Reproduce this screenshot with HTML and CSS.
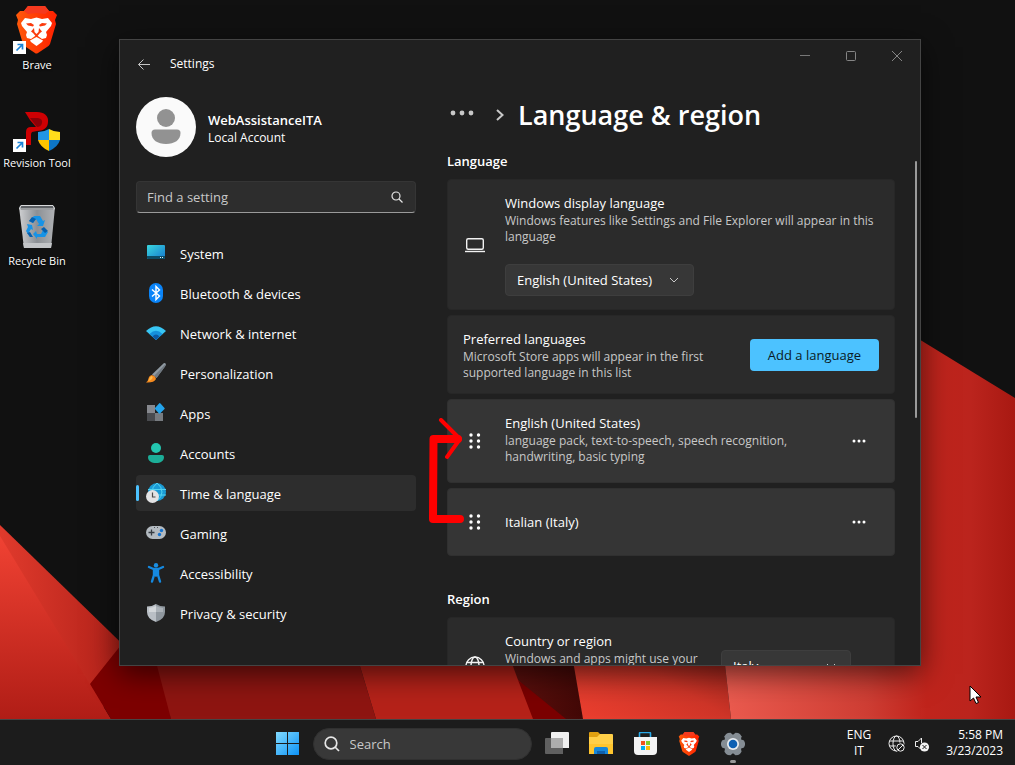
FILE: index.html
```html
<!doctype html>
<html lang="en">
<head>
  <meta charset="utf-8">
  <meta name="viewport" content="width=device-width, initial-scale=1">
  <title>Settings</title>
  <link rel="stylesheet" href="styles.css">
</head>
<body>
  <svg class="defs" width="0" height="0" aria-hidden="true">
    <defs>
      <linearGradient id="brave" x1="0" x2="1"><stop offset="0" stop-color="#ff5a0a"/><stop offset="1" stop-color="#ff2000"/></linearGradient>
      <symbol id="lion" viewBox="0 0 41 48">
        <path fill="url(#brave)" d="M12 0H29L33 5L37 5L41 9L39 14L40 18L34 38Q33 40 31 41L22 47Q20 48 19 47L10 41Q8 40 7 38L1 18L2 14L0 9L4 5L8 5Z"/>
        <path fill="#f5391e" d="M12 0H29L33 5L29 8L20 7L12 8L8 5Z"/>
        <path fill="#fff" d="M5 17L9 12L15 13L20.500 11.500L26 13L32 12L36 17L35 20L30 26L31 29L30 32L26 33L20.500 29L15 33L11 32L10 29L11 26L6 20Z"/>
        <path fill="#fff" d="M14 34.500L20.500 31L27 34.500L26 36L20.500 40L15 36Z"/>
        <path fill="#fb3a0c" d="M10 17.500L15 17L18 19L17 20.500L12 19.500ZM31 17.500L26 17L23 19L24 20.500L29 19.500ZM15 25.500L18 22L18.500 26L20.500 28L22.500 26L23 22L26 25.500L24 27L21.500 30H19.500L17 27Z"/>
      </symbol>
      <symbol id="shortcut" viewBox="0 0 13 13">
        <path fill="#fff" d="M0 0h13v13H0z"/>
        <path fill="none" stroke="#1a83d8" stroke-width="1.700" d="M3.500 9.500L9 4M4.500 3.500h5v5"/>
      </symbol>
      <symbol id="chevron" viewBox="0 0 10 6">
        <path fill="none" stroke="#c8c8c8" d="M1 1l4 4 4-4"/>
      </symbol>
      <symbol id="grip" viewBox="0 0 12 16">
        <g fill="#fff"><circle cx="2" cy="2" r="1.700"/><circle cx="9.500" cy="2" r="1.700"/><circle cx="2" cy="8" r="1.700"/><circle cx="9.500" cy="8" r="1.700"/><circle cx="2" cy="14" r="1.700"/><circle cx="9.500" cy="14" r="1.700"/></g>
      </symbol>
      <symbol id="dots" viewBox="0 0 14 4">
        <g fill="#fff"><circle cx="2" cy="2" r="1.500"/><circle cx="7" cy="2" r="1.500"/><circle cx="12" cy="2" r="1.500"/></g>
      </symbol>
    </defs>
  </svg>

  <main class="desktop">
    <svg class="wallpaper" viewBox="0 0 1015 719" preserveAspectRatio="none" aria-hidden="true">
      <defs>
        <linearGradient id="w1" x2="0" y2="1"><stop offset="0" stop-color="#f04233"/><stop offset="1" stop-color="#b01d16"/></linearGradient>
        <linearGradient id="w2" x2="1" y2="0"><stop offset="0" stop-color="#e03a2c"/><stop offset="1" stop-color="#a91d16"/></linearGradient>
        <linearGradient id="w3" x1="0" y1="1" x2="1" y2="0"><stop offset="0" stop-color="#ee4030"/><stop offset=".5" stop-color="#cf3528"/><stop offset="1" stop-color="#7d1a14"/></linearGradient>
        <linearGradient id="w4"><stop offset="0" stop-color="#ec5c50"/><stop offset=".5" stop-color="#cf3e34"/><stop offset=".7" stop-color="#c0241c"/><stop offset=".85" stop-color="#bb241d"/><stop offset="1" stop-color="#a81912"/></linearGradient>
        <linearGradient id="w5"><stop offset="0" stop-color="#63120f"/><stop offset="1" stop-color="#420806"/></linearGradient>
      </defs>
      <path fill="url(#w2)" d="M0 525L145 666 91 719H0z"/>
      <path fill="url(#w1)" d="M0 536L111 719H0z"/>
      <path fill="#7d0000" d="M90 684L125 640H160L171 719H111z"/>
      <path fill="#8e1511" d="M145 620H346L376 719H171z"/>
      <path fill="#b52219" d="M346 620H500L534 719H376z"/>
      <path fill="url(#w5)" d="M496 620H566L583 719H560L518 680z"/>
      <path fill="#7b0000" d="M518 680L566 719H533z"/>
      <path fill="url(#w3)" d="M566 620H720L731 719H583z"/>
      <path fill="url(#w4)" d="M720 620L860 303 1015 398V719H731z"/>
    </svg>

    <nav class="shortcuts" aria-label="Desktop">
      <a class="shortcut" href="#brave">
        <svg width="50" height="48" viewBox="0 0 50 48"><use href="#lion" x="4" width="41" height="48"/><use href="#shortcut" x="1" y="35" width="13" height="13"/></svg>
        <span>Brave</span>
      </a>
      <a class="shortcut" href="#revision">
        <svg width="50" height="48" viewBox="0 0 50 48">
          <path fill="#cf0003" d="M13 8H25C32 8 37 12 36 18C36 24 31 27 25 27L20 28Q19 29 19 31V41H14V28Q14 23 19 23H24L18 16Z"/>
          <path fill="#8c0007" d="M18 14H26Q31 15 30 19Q29 23 25 23Z"/>
          <path fill="#2196e3" d="M26 28Q32 28 37 25V36H26z"/><path fill="#ffdd1b" d="M37 25Q42 28 48 28V36H37z"/>
          <path fill="#ffc400" d="M26 36H37V47Q28 43 26 36"/><path fill="#0d76c6" d="M37 36H48Q46 43 37 47z"/>
          <use href="#shortcut" x="1" y="35" width="13" height="13"/>
        </svg>
        <span>Revision Tool</span>
      </a>
      <a class="shortcut" href="#bin">
        <svg width="50" height="48" viewBox="0 0 50 48">
          <defs><linearGradient id="bin"><stop offset="0" stop-color="#cfd0d2"/><stop offset=".5" stop-color="#8c9095"/><stop offset="1" stop-color="#b0b2b5"/></linearGradient></defs>
          <path fill="url(#bin)" d="M7 5H43L39 46H12z"/>
          <path fill="#5d6064" d="M9 3H40L43 5 41 8H9L7 5z"/>
          <path fill="none" stroke="#d9dadb" d="M9 3.500H41L42.500 7H7.500z"/>
          <path fill="#c3c5c8" d="M11 41H40L39 46H12z"/>
          <path fill="#1793e6" d="M22 14h6l3 5 2-1-2 6h-6l2-2-3-5-3 4-4-2zM15 22l5 1 1 5-2-1-3 5 3 3-1 0-4-6 2-4zM24 29l1 3h4l2-4 5 2-3 5h-8v2l-4-5z"/>
          <path fill="#0760ae" d="M20 15l4 2-3 4-4-2zM29 27l3-2 4 4-3 2zM18 30l3 5h-3l-3-4z"/>
        </svg>
        <span>Recycle Bin</span>
      </a>
    </nav>

    <section class="window">
      <header class="titlebar">
        <button class="back" aria-label="Back"><svg width="14" height="14" viewBox="0 0 14 14"><path fill="none" stroke="#c4c4c4" d="M13 7.500H1.500M6.500 2.500l-5 5 5 5"/></svg></button>
        <span class="app-name">Settings</span>
        <div class="caption">
          <button aria-label="Minimize"><svg width="12" height="12" viewBox="0 0 12 12"><path stroke="#777" d="M1 5.500h10"/></svg></button>
          <button aria-label="Maximize"><svg width="12" height="12" viewBox="0 0 12 12"><rect x="1.500" y="1.500" width="9" height="9" rx="1" fill="none" stroke="#858585"/></svg></button>
          <button aria-label="Close"><svg width="12" height="12" viewBox="0 0 12 12"><path stroke="#858585" d="M1 1l10 10M11 1L1 11"/></svg></button>
        </div>
      </header>

      <div class="content">
        <aside class="sidebar">
          <div class="account">
            <svg width="60" height="60" viewBox="0 0 60 60"><circle cx="30" cy="30" r="30" fill="#fafafa"/><circle cx="30" cy="21" r="9" fill="#929292"/><path fill="#929292" d="M19 32.500h22q3.500 0 3.500 3.500c0 7-6 11-14.500 11s-14.500-4-14.500-11q0-3.500 3.500-3.500z"/></svg>
            <div>
              <div class="user">WebAssistanceITA</div>
              <div class="kind">Local Account</div>
            </div>
          </div>

          <label class="find">
            <input type="search" placeholder="Find a setting" aria-label="Find a setting">
            <svg width="12" height="12" viewBox="0 0 12 12"><g fill="none" stroke="#e4e4e4" stroke-width="1.200"><circle cx="5" cy="5" r="4"/><path d="M8 8l3.500 3.500"/></g></svg>
          </label>

          <nav class="menu" aria-label="Settings">
            <a href="#system">
              <svg width="20" height="20" viewBox="0 0 20 20"><defs><linearGradient id="sys" x2="1" y2="1"><stop offset="0" stop-color="#3ad8df"/><stop offset="1" stop-color="#1577cd"/></linearGradient></defs><rect x="1" y="2" width="18" height="14" rx="1" fill="url(#sys)"/><path fill="#0c4c66" d="M1 13h18v2q0 1-1 1H2q-1 0-1-1z"/><path fill="#e0f4ff" d="M14 14h1v1h-1zM16 14h1v1h-1z"/></svg>
              <span>System</span></a>
            <a href="#bluetooth">
              <svg width="20" height="20" viewBox="0 0 20 20"><rect x="3" width="14" height="20" rx="7" fill="#0a84f8"/><path fill="none" stroke="#fff" stroke-width="1.400" d="M6 6.500l7.500 6.500-3.500 3.500V3.500L13.500 7 6 13.500"/></svg>
              <span>Bluetooth &amp; devices</span></a>
            <a href="#network">
              <svg width="20" height="20" viewBox="0 0 20 20"><path fill="#38c6f4" d="M0 8Q10-1.500 20 8L10 17z"/><path fill="#1590dc" d="M3.500 11Q10 4.500 16.500 11L10 17z"/><path fill="#0c59a4" d="M6.500 13.500Q10 9.500 13.500 13.500L10 17z"/></svg>
              <span>Network &amp; internet</span></a>
            <a href="#personalization">
              <svg width="20" height="20" viewBox="0 0 20 20"><path fill="#909aa2" d="M18 0q3 0 1 3.500L10.500 15 6 11.500z"/><path fill="#6f7880" d="M19.500 1q.5 1-.5 2.500L10.500 15 8 13z"/><path fill="#f58a1f" d="M6 12q3.500 1 4 4-2 4-10 3.500 2-1 2.500-4Q3 12.500 6 12z"/><path fill="#ffbb4a" d="M5.500 13q2 1 .5 3-2 2-4 2 1.500-1 1.500-3z"/></svg>
              <span>Personalization</span></a>
            <a href="#apps">
              <svg width="20" height="20" viewBox="0 0 20 20"><path fill="#87898f" d="M1 2h8v8H1z"/><path fill="#494b4f" d="M1 10h8v8H1z"/><path fill="#777b80" d="M9 10h8v8H9z"/><path fill="#23a4ec" d="M13.500 0q.5 0 1 .5L18.500 5q.5.5 0 1L14 10.500q-.5.5-1 0L9 6q-.5-.5 0-1z"/></svg>
              <span>Apps</span></a>
            <a href="#accounts">
              <svg width="20" height="20" viewBox="0 0 20 20"><circle cx="10" cy="5" r="5" fill="#23c6b0"/><path fill="#1cae98" d="M4 12h12q2 0 2 2c0 4-3.500 6-8 6s-8-2-8-6q0-2 2-2z"/></svg>
              <span>Accounts</span></a>
            <a class="active" href="#time" aria-current="page">
              <svg width="20" height="20" viewBox="0 0 20 20"><circle cx="11" cy="9" r="9" fill="#1a9bd5"/><path fill="none" stroke="#53d3f0" d="M2 6.500h18M3 12h17M11 0q-5 4-5 9t5 9q5-4 5-9t-5-9z"/><circle cx="6.500" cy="13.500" r="6.500" fill="#e3e3e4"/><path fill="none" stroke="#4a4a4a" stroke-width="1.200" d="M6.500 9.500V14h3"/></svg>
              <span>Time &amp; language</span></a>
            <a href="#gaming">
              <svg width="20" height="20" viewBox="0 0 20 20"><rect y="3" width="20" height="13" rx="6.500" fill="#b3bac0"/><path stroke="#343b42" stroke-width="1.300" d="M2.500 9.500h6M5.500 6.500v6"/><circle cx="15.500" cy="7.500" r="1.700" fill="#1573cf"/><circle cx="13.500" cy="11.500" r="1.700" fill="#1573cf"/><path fill="#4c5156" d="M8 4h1v1H8zM11 4h1v1h-1z"/></svg>
              <span>Gaming</span></a>
            <a href="#accessibility">
              <svg width="20" height="20" viewBox="0 0 20 20"><circle cx="10" cy="2.200" r="2.200" fill="#1b8fe2"/><path fill="none" stroke="#1589e0" stroke-width="2.400" stroke-linecap="round" stroke-linejoin="round" d="M3 4l4.500 2h5L17 4M8 7v5L6 18.500M12 7v5L14 18.500"/><path fill="#1589e0" d="M7 6h6v7l-1.500 0L10 14l-1.500-1H7z"/></svg>
              <span>Accessibility</span></a>
            <a href="#privacy">
              <svg width="20" height="20" viewBox="0 0 20 20"><path fill="#b9bfc5" d="M10 1Q6 3.500 1 3.500V9q0 7 9 10z"/><path fill="#8f979e" d="M10 1q4 2.500 9 2.500V9q0 7-9 10z"/><path fill="#d3d7da" d="M10 3Q7 4.500 3 5v4h7z"/><path fill="#abb2b8" d="M10 3q3 1.500 7 2v4h-7z"/></svg>
              <span>Privacy &amp; security</span></a>
          </nav>
        </aside>

        <section class="page">
          <div class="breadcrumb">
            <button aria-label="More"><svg width="24" height="6" viewBox="0 0 24 6"><g fill="#c8c8c8"><circle cx="3" cy="3" r="2.400"/><circle cx="12" cy="3" r="2.400"/><circle cx="21" cy="3" r="2.400"/></g></svg></button>
            <svg width="8" height="12" viewBox="0 0 8 12"><path fill="none" stroke="#c8c8c8" stroke-width="2" d="M1 1l5.500 5L1 11"/></svg>
            <h1>Language &amp; region</h1>
          </div>

          <h2>Language</h2>
          <div class="cards">
            <div class="card">
              <svg class="icon" width="20" height="16" viewBox="0 0 20 16"><rect x="1.700" y="1.700" width="16.600" height="10.600" rx="1.500" fill="none" stroke="#f2f2f2" stroke-width="1.400"/><path stroke="#f2f2f2" stroke-width="1.400" d="M0 14.500h20"/></svg>
              <div class="text">
                <label class="name" for="display">Windows display language</label>
                <p>Windows features like Settings and File Explorer will appear in this language</p>
                <div class="select">
                  <select id="display"><option>English (United States)</option></select>
                  <svg width="10" height="6"><use href="#chevron"/></svg>
                </div>
              </div>
            </div>

            <div class="card plain">
              <div class="text narrow">
                <div class="name">Preferred languages</div>
                <p>Microsoft Store apps will appear in the first supported language in this list</p>
              </div>
              <button class="primary">Add a language</button>
            </div>

            <div class="card language">
              <svg class="icon" width="12" height="16"><use href="#grip"/></svg>
              <div class="text">
                <div class="name">English (United States)</div>
                <p>language pack, text-to-speech, speech recognition, handwriting, basic typing</p>
              </div>
              <button class="more" aria-label="English options"><svg width="14" height="4"><use href="#dots"/></svg></button>
            </div>

            <div class="card language">
              <svg class="icon" width="12" height="16"><use href="#grip"/></svg>
              <div class="text">
                <div class="name">Italian (Italy)</div>
              </div>
              <button class="more" aria-label="Italian options"><svg width="14" height="4"><use href="#dots"/></svg></button>
            </div>
          </div>

          <h2 class="second">Region</h2>
          <div class="cards">
            <div class="card region">
              <svg class="icon" width="20" height="20" viewBox="0 0 20 20"><g fill="none" stroke="#f2f2f2" stroke-width="1.400"><circle cx="10" cy="10" r="9"/><ellipse cx="10" cy="10" rx="4" ry="9"/><path d="M2 6.500h16M2 13.500h16"/></g></svg>
              <div class="text">
                <label class="name" for="country">Country or region</label>
                <p>Windows and apps might use your</p>
              </div>
              <div class="select wide">
                <select id="country"><option>Italy</option></select>
                <svg width="10" height="6"><use href="#chevron"/></svg>
              </div>
            </div>
          </div>
        </section>
      </div>
      <div class="scrollbar"></div>

      <!-- move Italian above English -->
      <svg class="arrow" width="40" height="110" viewBox="0 0 40 110" aria-hidden="true">
        <g fill="none" stroke="#f00" stroke-linecap="round" stroke-linejoin="round">
          <path stroke-width="8" d="M30 21H5.500L5 101H32"/>
          <path stroke-width="4" d="M13 2L32 21 19 39"/>
        </g>
      </svg>
    </section>

    <svg class="cursor" width="13" height="20" viewBox="0 0 13 20" aria-hidden="true"><path fill="#fff" stroke="#000" d="M1 1v15l3.500-3 2.500 5.500 2.500-1L7 12h5z"/></svg>
  </main>

  <footer class="taskbar">
    <div class="pinned">
      <button aria-label="Start"><svg width="24" height="24" viewBox="0 0 24 24"><defs><linearGradient id="win" gradientUnits="userSpaceOnUse" x2="24" y2="24"><stop offset="0" stop-color="#84dcff"/><stop offset="1" stop-color="#0a90f5"/></linearGradient></defs><path fill="url(#win)" d="M1 0h11v11H1zM13 0h11v11H13zM1 12h11v11H1zM13 12h11v11H13z"/></svg></button>
      <label class="search">
        <svg width="16" height="16" viewBox="0 0 16 16"><g fill="none" stroke="#e6e6e6" stroke-width="1.700"><circle cx="7" cy="7" r="5.800"/><path d="M11 11l4 4"/></g></svg>
        <input type="search" placeholder="Search" aria-label="Search">
      </label>
      <button aria-label="Task view"><svg width="24" height="24" viewBox="0 0 24 24"><path fill="#f0f0f0" d="M7 0h16q1 0 1 1v15H6V1q0-1 1-1z"/><path fill="#606060" d="M1 6h17v16H1q-1 0-1-1V7q0-1 1-1z"/><path fill="#adadad" d="M6 6h12v10H6z"/></svg></button>
      <button aria-label="File Explorer"><svg width="24" height="24" viewBox="0 0 24 24"><path fill="#e0a010" d="M0 1q0-1 1-1h8l2 2v4H0z"/><path fill="#ffcf48" d="M0 5h8l3-3h12q1 0 1 1v19H0z"/><path fill="#ffc52e" d="M0 12h24v10H0z"/><path fill="#1687da" d="M5 17q0-2 2-2h10q2 0 2 2v5H5z"/><path fill="#0e60ad" d="M8 19h8v3H8z"/></svg></button>
      <button aria-label="Microsoft Store"><svg width="24" height="24" viewBox="0 0 24 24"><path fill="none" stroke="#29a9e8" stroke-width="1.600" d="M6.500 6V1.500q0-1 1-1h9q1 0 1 1V6"/><path fill="#f3f3f3" d="M1 5h23v14q0 4-4 4H5q-4 0-4-4z"/><path fill="#f1511b" d="M8 9h4v4H8z"/><path fill="#80cc28" d="M13 9h4v4h-4z"/><path fill="#00adef" d="M8 14h4v4H8z"/><path fill="#fbbc09" d="M13 14h4v4h-4z"/></svg></button>
      <button aria-label="Brave"><svg width="24" height="24"><use href="#lion"/></svg></button>
      <button class="running" aria-label="Settings"><svg width="24" height="24" viewBox="0 0 24 24"><g fill="#858d94"><circle cx="12" cy="12" r="9"/><path id="tooth" d="M0 11l1-2.500L5 7h14l4 1.500 1 2.500v2l-1 2.500L19 17H5l-4-1.500L0 13z"/><use href="#tooth" transform="rotate(60 12 12)"/><use href="#tooth" transform="rotate(120 12 12)"/></g><circle cx="12" cy="12" r="6" fill="#e9edf0"/><circle cx="12" cy="12" r="4.300" fill="#0d60b3"/></svg></button>
    </div>
    <div class="tray">
      <button class="lang">ENG<br>IT</button>
      <div class="status">
        <svg width="18" height="18" viewBox="0 0 18 18"><g fill="none" stroke="#eee"><circle cx="8.500" cy="8.500" r="7.500"/><ellipse cx="8.500" cy="8.500" rx="3.500" ry="7.500"/><path d="M1.500 6h14M1.500 11h7"/></g><circle cx="12.500" cy="12.500" r="5" fill="#1c1c1c"/><circle cx="12.500" cy="12.500" r="3.700" fill="none" stroke="#eee"/><path stroke="#eee" d="M10 15l5-5"/></svg>
        <svg width="18" height="18" viewBox="0 0 18 18"><path fill="none" stroke="#eee" d="M8.500 8V3L5 6.500H2.500v5H5l2.500 2.500"/><circle cx="11.500" cy="12" r="4.600" fill="#f4f4f4"/><path stroke="#1c1c1c" d="M9.500 10l4 4M13.500 10l-4 4"/></svg>
      </div>
      <button class="clock">5:58 PM<br>3/23/2023</button>
    </div>
  </footer>
</body>
</html>
```

FILE: styles.css
```css
* {
  box-sizing: border-box;
}

body {
  margin: 0;
  height: 100vh;
  display: flex;
  flex-direction: column;
  overflow: hidden;
  background: #111;
  color: #fff;
  font: 13px/20px "Segoe UI", "Open Sans", "Noto Sans", sans-serif;
}

h1, h2, p {
  margin: 0;
}

a {
  color: inherit;
  text-decoration: none;
}

button, input, select {
  margin: 0;
  padding: 0;
  border: 0;
  background: none;
  color: inherit;
  font: inherit;
}

svg {
  display: block;
  flex: none;
}

.defs {
  position: absolute;
}

/* desktop */
.desktop {
  position: relative;
  flex: 1;
  min-height: 0;
}

.wallpaper {
  position: absolute;
  width: 100%;
  height: 100%;
}

.shortcuts {
  position: relative;
  display: flex;
  flex-direction: column;
  gap: 30px;
  width: 74px;
  padding-top: 6px;
}

.shortcut {
  display: flex;
  flex-direction: column;
  align-items: center;
  gap: 3px;
  height: 68px;
  font-size: 11px;
  line-height: 16px;
  white-space: nowrap;
  text-shadow: 0 1px 2px #000;
}

/* settings window */
.window {
  position: absolute;
  top: 39px;
  right: 94px;
  bottom: 53px;
  left: 119px;
  display: flex;
  flex-direction: column;
  border: 1px solid #444;
  background: #202020;
  box-shadow: 0 8px 28px rgba(0, 0, 0, 0.6);
}

.titlebar {
  display: flex;
  align-items: center;
  height: 48px;
  padding-left: 17px;
  font-size: 12px;
}

.app-name {
  margin-left: 19px;
}

.caption {
  display: flex;
  align-self: flex-start;
  margin-left: auto;
}

.caption button {
  display: grid;
  place-items: center;
  width: 46px;
  height: 32px;
}

.content {
  display: flex;
  flex: 1;
  gap: 31px;
  min-height: 0;
  padding: 9px 25px 0 16px;
  overflow: hidden;
}

.sidebar {
  flex: none;
  width: 280px;
}

.account {
  display: flex;
  align-items: center;
  gap: 12px;
}

.user {
  padding-top: 2px;
  font-weight: 600;
}

.kind {
  font-size: 12px;
  line-height: 16px;
}

.find {
  display: flex;
  align-items: center;
  height: 32px;
  margin: 24px 0 22px;
  padding: 0 12px 0 10px;
  border: 1px solid #353535;
  border-bottom-color: #9a9a9a;
  border-radius: 4px;
  background: #2d2d2d;
}

.find input, .search input {
  flex: 1;
  min-width: 0;
  outline: 0;
}

.find input::placeholder, .search input::placeholder {
  color: #c8c8c8;
  opacity: 1;
}

.menu {
  display: flex;
  flex-direction: column;
  gap: 4px;
}

.menu a {
  display: flex;
  align-items: center;
  gap: 14px;
  height: 36px;
  padding-left: 10px;
  border-radius: 4px;
}

.menu span {
  padding-top: 2px;
}

.menu .active {
  position: relative;
  background: #2d2d2d;
}

.menu .active::before {
  content: "";
  position: absolute;
  top: 10px;
  left: 0;
  width: 3px;
  height: 16px;
  border-radius: 2px;
  background: #4cc2ff;
}

/* page */
.page {
  flex: 1;
  min-width: 0;
}

.breadcrumb {
  display: flex;
  align-items: center;
  height: 36px;
  padding-left: 3px;
}

.breadcrumb button {
  margin: 0 22px 4px 0;
}

h1 {
  margin-left: 14px;
  font-size: 27px;
  font-weight: 600;
  line-height: 36px;
}

h2 {
  margin: 18px 0 8px;
  font-size: 13px;
  font-weight: 600;
}

h2.second {
  margin-top: 33px;
}

.cards {
  display: flex;
  flex-direction: column;
  gap: 5px;
}

.card {
  display: flex;
  align-items: center;
  padding: 13px 15px;
  border: 1px solid #272727;
  border-radius: 4px;
  background: #2b2b2b;
}

.plain {
  padding-bottom: 12px;
}

.icon {
  width: 24px;
  margin-right: 18px;
}

.text {
  flex: 1;
}

.narrow {
  max-width: 250px;
  margin-right: auto;
}

.name {
  display: block;
}

.text p {
  color: #c8c8c8;
  font-size: 12px;
  line-height: 16px;
}

.select {
  position: relative;
  width: max-content;
}

.text .select {
  margin-top: 19px;
}

.select select {
  appearance: none;
  height: 32px;
  padding: 0 40px 0 11px;
  border: 1px solid #3e3e3e;
  border-radius: 4px;
  background: #373737;
}

.select svg {
  position: absolute;
  top: 13px;
  right: 15px;
  pointer-events: none;
}

.wide select {
  width: 130px;
}

.primary {
  height: 32px;
  padding: 0 18px;
  border-radius: 4px;
  background: #4cc2ff;
  color: #0a1a24;
}

.language {
  min-height: 68px;
  border-color: #303030;
  background: #353535;
}

.language p {
  max-width: 300px;
  padding-bottom: 4px;
}

.more {
  display: grid;
  place-items: center;
  width: 40px;
  height: 32px;
}

.region {
  min-height: 97px;
  padding-right: 43px;
}

.region .text {
  align-self: flex-start;
  margin-right: 16px;
}

.scrollbar {
  position: absolute;
  top: 121px;
  right: 3px;
  width: 2px;
  height: 257px;
  border-radius: 1px;
  background: #9a9a9a;
}

.arrow {
  position: absolute;
  top: 378px;
  left: 308px;
}

.cursor {
  position: absolute;
  top: 685px;
  left: 969px;
}

/* taskbar */
.taskbar {
  display: grid;
  grid-template-columns: 1fr auto 1fr;
  align-items: center;
  height: 46px;
  border-top: 1px solid #454545;
  background: #1c1c1c;
}

.pinned {
  grid-column: 2;
  display: flex;
  align-items: center;
  padding: 2px 0 0 4px;
}

.pinned button {
  position: relative;
  display: grid;
  place-items: center;
  width: 44px;
  height: 40px;
}

.running::after {
  content: "";
  position: absolute;
  bottom: 1px;
  left: 19px;
  width: 6px;
  height: 3px;
  border-radius: 2px;
  background: #999;
}

.search {
  display: flex;
  align-items: center;
  gap: 10px;
  width: 219px;
  height: 32px;
  margin: 0 3px 0 4px;
  padding: 0 10px;
  border: 1px solid #303030;
  border-radius: 16px;
  background: #383838;
}

.tray {
  display: flex;
  align-items: center;
  justify-content: flex-end;
  padding-right: 12px;
  font-size: 12px;
  line-height: 16px;
}

.status {
  display: flex;
  gap: 7px;
  margin: 3px 15px 0 17px;
}

.clock {
  text-align: right;
}
```
